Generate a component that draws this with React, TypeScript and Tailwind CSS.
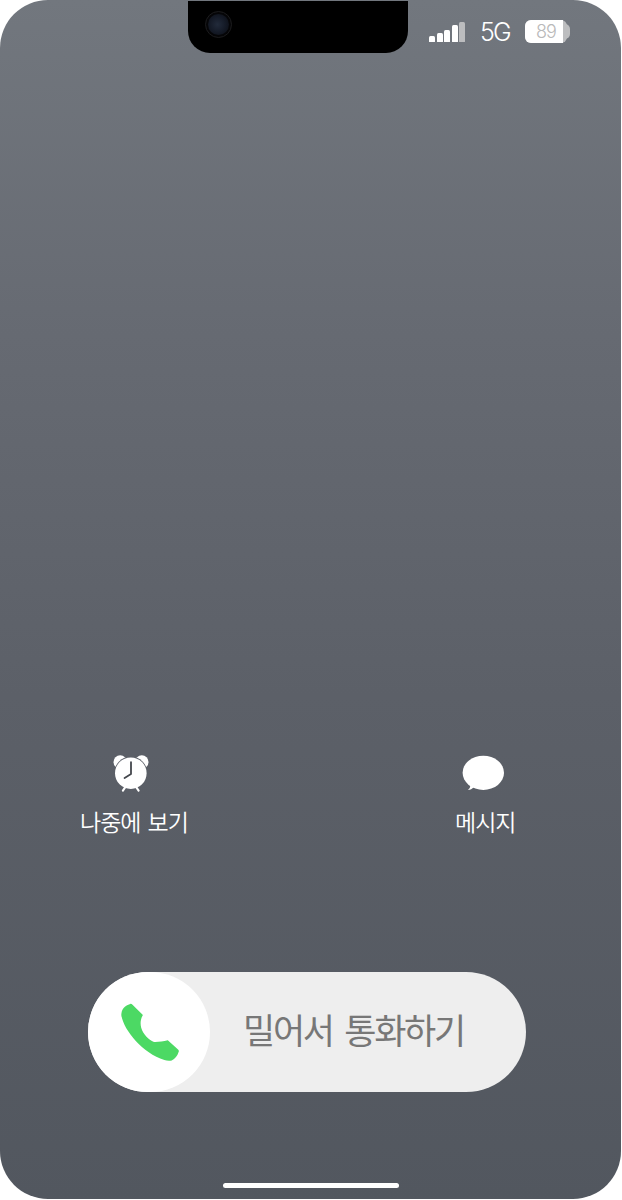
const fontStack = "font-['Noto_Sans_CJK_KR','Noto_Sans',sans-serif]"

const signalBars = [
  { height: 'h-[6px]', color: 'bg-white' },
  { height: 'h-[9px]', color: 'bg-white' },
  { height: 'h-[12px]', color: 'bg-white' },
  { height: 'h-[17px]', color: 'bg-white' },
  { height: 'h-[20px]', color: 'bg-[#bcbdbf]' },
]

function Notch() {
  return (
    <div className="ml-[188px] mt-px h-[52px] w-[220px] rounded-b-[22px] bg-black pl-[17px] pt-[10px] shrink-0">
      <div className="flex h-[27px] w-[27px] items-center justify-center rounded-full border border-[#1c1c1e] bg-[#050507]">
        <div className="h-[21px] w-[21px] rounded-full bg-[radial-gradient(circle_at_45%_50%,#222b3b_0%,#161c29_45%,#080a10_100%)]" />
      </div>
    </div>
  )
}

function StatusIcons() {
  return (
    <div className="ml-[21px] mt-[20px] flex h-[23px] items-start font-['Inter','Liberation_Sans',sans-serif]">
      <div className="flex h-[22px] w-[36px] items-end gap-[1.5px]">
        {signalBars.map((bar) => (
          <div key={bar.height} className={`w-[6px] rounded-t-[1.5px] rounded-b-[0.5px] ${bar.height} ${bar.color}`} />
        ))}
      </div>
      <span className="ml-[15px] w-[45px] text-[25px] leading-[24px] font-light tracking-[-1.8px] text-white">5G</span>
      {/* Battery */}
      <div className="relative flex h-[23px] w-[45px] items-center">
        <div className="absolute top-[4px] right-0 h-[15px] w-[8px] rounded-r-[5px] bg-[#bcbdbf]" />
        <div className="relative flex h-[23px] w-[42px] rounded-[6px] bg-[#bcbdbf]">
          <div className="h-full w-[38px] rounded-l-[6px] bg-white pl-[11px] text-[18px] leading-[23px] font-light tracking-[-1px] text-[#b9b9b9]">89</div>
        </div>
      </div>
    </div>
  )
}

function AlarmIcon() {
  return (
    <svg className="h-[42px] w-[40px]" viewBox="0 0 40 42" fill="none">
      <circle cx="10.2" cy="10" r="6.7" fill="#fff" />
      <circle cx="31.8" cy="10" r="6.7" fill="#fff" />
      <circle cx="20.8" cy="21.2" r="16.6" fill="#5c6068" />
      <path d="M15.3 35.2L12.9 38.7M26.2 35.2L28.6 38.7" stroke="#fff" strokeWidth="2.1" strokeLinecap="round" />
      <circle cx="20.8" cy="21.2" r="15.8" fill="#fff" />
      <path d="M21 10.2V22.1L14.6 26" stroke="#44474d" strokeWidth="1.8" strokeLinecap="round" strokeLinejoin="round" />
    </svg>
  )
}

function MessageIcon() {
  return (
    <svg className="h-[42px] w-[44px]" viewBox="0 0 44 42" fill="#fff">
      <ellipse cx="22.3" cy="20.8" rx="20.7" ry="17.1" />
      <path d="M9.2 32.2C9.6 34.8 8.7 36.8 6.8 38.1C9.2 38.2 11 36.6 13 35Z" />
    </svg>
  )
}

function PhoneIcon() {
  return (
    <svg className="h-[60px] w-[60px]" viewBox="0 0 60 60" fill="#4cd964">
      <path d="M1.5 11C2 5.6 7.2 2.7 10.2 1.9C11 1.7 11.8 2 12.5 2.7L22.9 13C20.3 17.5 20.2 22 21.2 25.7C23.2 32.5 28.5 37.5 34 39.9C38.5 40 43 39.6 47.8 38.3L58.3 47.7C59 48.5 59 49 58.6 50C57.5 53.6 55 57 51.7 58.4C49.8 59 46.7 58.8 44.4 58.1C22.5 51 4 28.5 1.4 13.7C1.2 12.7 1.4 11.8 1.5 11Z" />
    </svg>
  )
}

export default function App() {
  return (
    <div className="h-[1200px] w-[622px] overflow-hidden bg-white">
      <main className={`flex h-[1199px] w-[621px] flex-col overflow-hidden rounded-[48px] bg-[linear-gradient(180deg,#72777e_0%,#666a72_28%,#5c6068_58%,#52575f_100%)] ${fontStack}`}>
        <header className="flex h-[54px] shrink-0 items-start">
          <Notch />
          <StatusIcons />
        </header>

        {/* Secondary actions */}
        <section className="mt-[698px] flex h-[90px] shrink-0">
          <button className="ml-[80px] flex w-[110px] flex-col items-start">
            <span className="ml-[30px]">
              <AlarmIcon />
            </span>
            <span className="mt-[10px] text-[23px] leading-[34px] font-[350] tracking-[-1px] [word-spacing:3px] whitespace-nowrap text-white">나중에 보기</span>
          </button>
          <button className="ml-[265px] flex w-[66px] flex-col items-start">
            <span className="ml-[6px]">
              <MessageIcon />
            </span>
            <span className="mt-[10px] text-[23px] leading-[34px] font-[350] tracking-[-1px] whitespace-nowrap text-white">메시지</span>
          </button>
        </section>

        {/* Slide to answer */}
        <div className="mt-[130px] ml-[88px] flex h-[120px] w-[438px] shrink-0 items-center rounded-full bg-[#eeeeee]">
          <div className="flex h-[120px] w-[122px] items-center justify-center rounded-full bg-white pl-[2px]">
            <PhoneIcon />
          </div>
          <span className="-mt-[6px] ml-[33px] text-[35px] leading-[50px] font-normal tracking-[-2.3px] [word-spacing:6px] whitespace-nowrap text-[#777777]">밀어서 통화하기</span>
        </div>

        <div className="mt-[91px] ml-[223px] h-[5px] w-[176px] shrink-0 rounded-full bg-white" />
      </main>
    </div>
  )
}
